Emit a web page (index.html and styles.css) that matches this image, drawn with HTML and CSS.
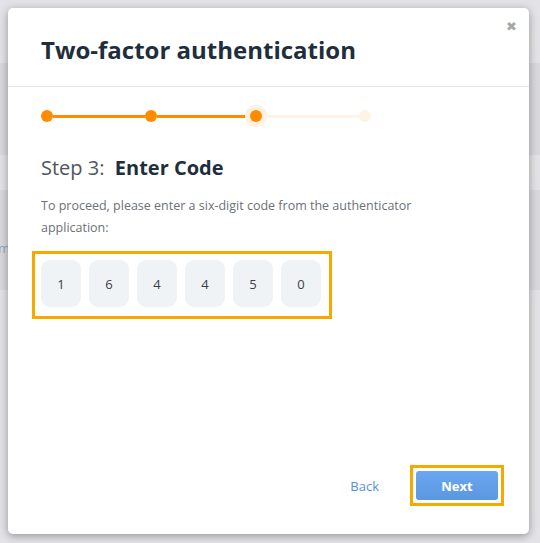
FILE: index.html
```html
<!DOCTYPE html>
<html>

<head>
  <meta charset="utf-8">
  <title>Two-factor authentication</title>
  <link rel="stylesheet" href="styles.css">
</head>

<body>
  <div class="backdrop">
    <div class="bandA"></div>
    <div class="bandB"><span class="peek">m</span></div>
  </div>

  <div class="modal">
    <button class="close" type="button">&#x2716;</button>
    <div class="modal-head">
      <h1>Two-factor authentication</h1>
    </div>

    <div class="modal-body">
      <div class="stepper">
        <span class="dot done"></span>
        <span class="line done l1"></span>
        <span class="dot done"></span>
        <span class="line done l2"></span>
        <span class="dot current"></span>
        <span class="line l3"></span>
        <span class="dot"></span>
      </div>

      <h2 class="step-title">Step 3:&nbsp; <b>Enter Code</b></h2>
      <p class="hint">To proceed, please enter a six-digit code from the authenticator application:</p>

      <div class="code">
        <span class="digit">1</span>
        <span class="digit">6</span>
        <span class="digit">4</span>
        <span class="digit">4</span>
        <span class="digit">5</span>
        <span class="digit">0</span>
      </div>
    </div>

    <div class="modal-foot">
      <a class="back" href="#">Back</a>
      <div class="next-wrap">
        <button class="next" type="button">Next</button>
      </div>
    </div>
  </div>
</body>

</html>
```

FILE: styles.css
```css
html,
body {
  margin: 0;
  height: 100%;
}

body {
  background-color: #e3e3e7;
  font-family: "Open Sans", "Liberation Sans", sans-serif;
  position: relative;
  overflow: hidden;
}

.backdrop {
  padding-top: 63px;
}

.bandA {
  height: 92px;
  background-color: #d9d9dd;
}

.bandB {
  margin-top: 35px;
  height: 100px;
  background-color: #d9d9dd;
  padding-top: 52px;
  box-sizing: border-box;
}

.peek {
  display: block;
  color: #8fa6c8;
  font-size: 13px;
  line-height: 13px;
  margin-left: -2px;
}

.modal {
  position: absolute;
  left: 8px;
  top: 8px;
  width: 521px;
  height: 526px;
  box-sizing: border-box;
  background-color: #ffffff;
  border-radius: 5px;
  box-shadow: 0 2px 8px rgba(0, 0, 0, 0.35);
  display: flex;
  flex-direction: column;
}

.close {
  position: absolute;
  right: 12px;
  top: 11px;
  border: none;
  background: none;
  color: #a6a6a6;
  font-size: 13px;
  padding: 0;
  cursor: pointer;
}

.modal-head {
  padding: 26px 33px 20px;
  border-bottom: 1px solid #e1e8ea;
}

.modal-head h1 {
  margin: 0;
  font-size: 24px;
  line-height: 32px;
  font-weight: 700;
  color: #1e2e3c;
}

.modal-body {
  padding: 0 33px;
}

.stepper {
  display: flex;
  align-items: center;
  height: 58px;
}

.dot {
  width: 12px;
  height: 12px;
  border-radius: 50%;
  background-color: #fdf3e6;
  flex: none;
}

.dot.done {
  background-color: #ff8c00;
}

.dot.current {
  background-color: #ff8c00;
  box-shadow: 0 0 0 5px #fff1e0;
}

.line {
  height: 3px;
  background-color: #fdf3e6;
}

.line.done {
  background-color: #ff8c00;
}

.l1 {
  width: 92px;
}

.l2 {
  width: 93px;
}

.l3 {
  width: 97px;
}

.step-title {
  margin: 9px 0 0;
  font-size: 20px;
  line-height: 28px;
  font-weight: 400;
  color: #4b5660;
}

.step-title b {
  font-weight: 700;
  color: #1e2e3c;
}

.hint {
  margin: 13px 0 0;
  font-size: 12.5px;
  line-height: 22px;
  color: #6c7177;
  width: 400px;
}

.code {
  display: inline-flex;
  gap: 8px;
  margin-top: 12px;
  margin-left: -9px;
  padding: 6px 8px 9px 6px;
  border: 3px solid #f7a900;
}

.digit {
  width: 40px;
  height: 47px;
  border-radius: 9px;
  background-color: #f0f3f6;
  color: #3b4047;
  font-size: 13px;
  display: flex;
  align-items: center;
  justify-content: center;
}

.modal-foot {
  margin-top: auto;
  display: flex;
  justify-content: flex-end;
  align-items: center;
  gap: 30px;
  padding: 0 25px 28px 0;
}

.back {
  color: #5a8fd6;
  font-size: 13px;
  text-decoration: none;
  margin-right: 1px;
}

.next-wrap {
  border: 3px solid #f7a900;
  padding: 3px;
}

.next {
  width: 82px;
  height: 29px;
  border: none;
  border-radius: 3px;
  background: linear-gradient(#6ba7f0, #5b96e2);
  color: #ffffff;
  font-family: "Open Sans", "Liberation Sans", sans-serif;
  font-size: 13px;
  font-weight: 700;
  cursor: pointer;
}
```
